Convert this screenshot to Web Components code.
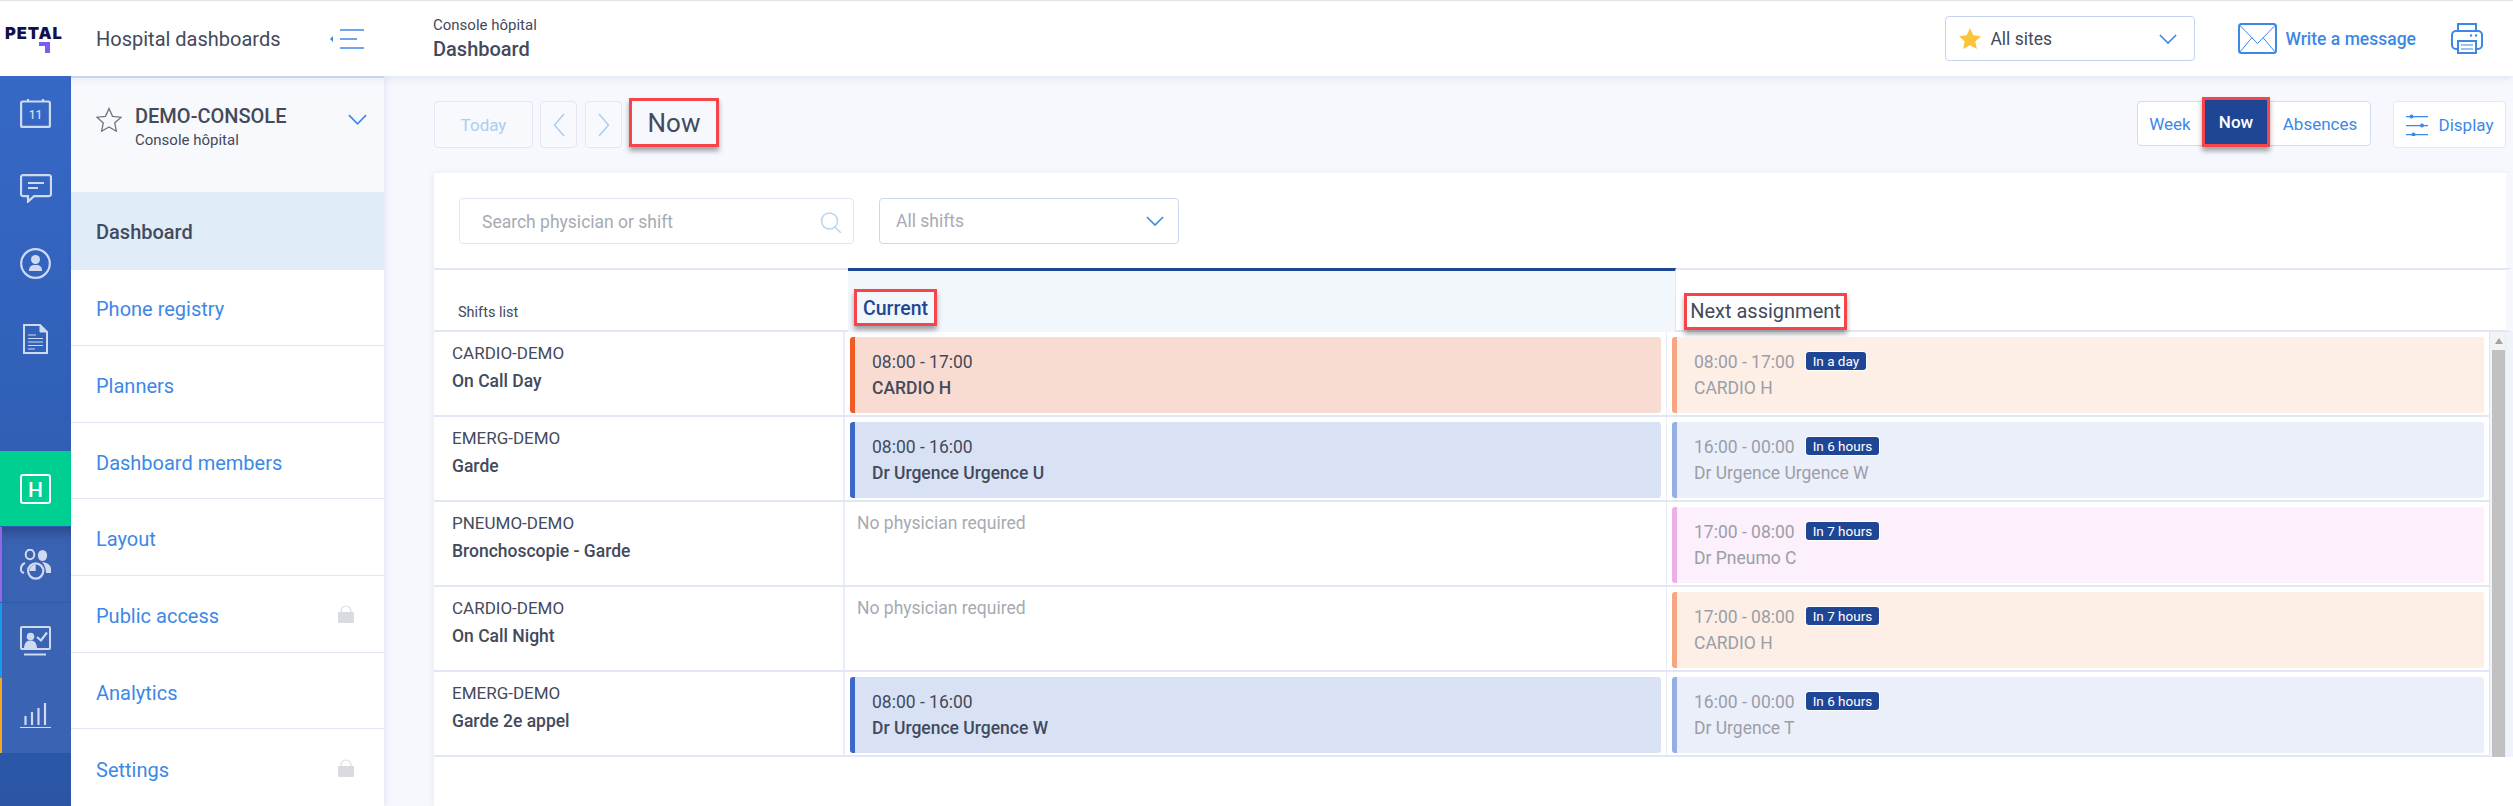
<!DOCTYPE html>
<html lang="en">
<head>
<meta charset="utf-8">
<title>Hospital dashboards</title>
<style>
html, body { margin: 0; height: 100%; overflow: hidden; }
body { font-family: Roboto, "Liberation Sans", sans-serif; color: #434a5c; background: #fff; }
</style>
</head>
<body>
<app-shell></app-shell>

<script>
// small helper, every element clones its own template into an open shadow root
function makeTemplate(html) {
    const t = document.createElement('template');
    t.innerHTML = html;
    return t;
}

class Base extends HTMLElement {
    constructor() {
        super();
        this.attachShadow({mode: 'open'});
        this.shadowRoot.appendChild(this.constructor.template.content.cloneNode(true));
    }
}

const chevronDown = (w, h) => `<svg width="${w}" height="${h}" viewBox="0 0 20 11" fill="none" stroke="#3d88e6" stroke-width="1.8"><path d="M1 1l9 9 9-9"/></svg>`;
const lockIcon = `<svg width="16" height="18" viewBox="0 0 16 18"><path d="M3 8V6a5 5 0 0 1 10 0v2" fill="none" stroke="#dcdde2" stroke-width="1.2"/><rect y="7" width="16" height="11" rx="1" fill="#dadbe0"/></svg>`;

class MarkBox extends Base {
    static template = makeTemplate(`
    <style>
    :host { display: inline-flex; align-items: center; justify-content: center; box-sizing: border-box; white-space: nowrap;
        border: 3px solid #f5444a; box-shadow: 0 4px 5px rgba(0,0,0,.35); }
    </style>
    <slot></slot>`);
}

class PetalLogo extends Base {
    static template = makeTemplate(`
    <style>
    :host { display: block; width: 58px; height: 27px; padding-left: 5px; }
    .word { font: 900 16.5px/13px Inter, sans-serif; letter-spacing: .9px; color: #12104a; display: block; margin-top: 2px; }
    svg { display: block; margin: 2px 0 0 34px; }
    </style>
    <span class="word">PETAL</span>
    <svg width="11" height="11" viewBox="0 0 11 11"><path d="M0 0h11v11H6V4H0z" fill="#7a5cf5"/></svg>`);
}

class AppTopbar extends Base {
    static template = makeTemplate(`
    <style>
    :host { display: flex; align-items: center; height: 75px; border-top: 1px solid #e4e4e4; background: #fff;
        box-shadow: 0 2px 8px rgba(80,110,200,.14); position: relative; z-index: 3; }
    petal-logo { flex: none; width: 91px; }
    .app { font-size: 20px; width: 233px; flex: none; }
    .back { flex: none; width: 104px; display: flex; }
    .crumb { flex: 1; line-height: 1; }
    .crumb small { display: block; font-size: 15px; margin-bottom: 6px; }
    .crumb b { display: block; font-size: 20px; font-weight: 500; }
    .site { flex: none; box-sizing: border-box; width: 250px; height: 45px; border: 1px solid #c3d3f0; border-radius: 4px;
        display: flex; align-items: center; padding: 0 17px 0 13px; font-size: 17.5px; gap: 9px; margin-right: 43px; }
    .site span { flex: 1; }
    .write { flex: none; display: flex; align-items: center; gap: 8px; color: #3d88e6; font-size: 17.5px; font-weight: 500; margin-right: 35px; }
    .print { flex: none; margin-right: 30px; display: flex; }
    </style>
    <petal-logo></petal-logo>
    <div class="app">Hospital dashboards</div>
    <div class="back">
        <svg width="35" height="20" viewBox="0 0 35 20"><path d="M1 10l3-3v6z" fill="#3d88e6"/><path d="M11 1h24M11 10h17M11 19h24" stroke="#3d88e6" stroke-width="1.3"/></svg>
    </div>
    <div class="crumb"><small>Console hôpital</small><b>Dashboard</b></div>
    <div class="site">
        <svg width="22" height="21" viewBox="0 0 24 23"><path d="M12 0l3.600 7.900 8.400 1-6.200 5.800 1.700 8.300L12 18.800 4.500 23l1.700-8.300L0 8.900l8.400-1z" fill="#fcc439"/></svg>
        <span>All sites</span>
        ${chevronDown(18, 10)}
    </div>
    <div class="write">
        <svg width="39" height="31" viewBox="0 0 39 31" fill="none" stroke="#3d88e6"><rect x="1" y="1" width="37" height="29" rx="2.500" stroke-width="2"/><path d="M1.500 2l18 18.500 18-18.500M1.500 29.500l12.500-15M37.500 29.500l-12.500-15" stroke-width="1"/></svg>
        Write a message
    </div>
    <div class="print">
        <svg width="32" height="31" viewBox="0 0 32 31" fill="none" stroke="#3d88e6" stroke-width="2"><path d="M7 8V1h18v7"/><rect x="1" y="8" width="30" height="18" rx="4"/><rect x="7" y="18" width="18" height="12" fill="#fff"/><path d="M10 22h12M10 26h12" stroke-width="1"/><circle cx="20" cy="12.500" r="1.200" fill="#3d88e6" stroke="none"/><circle cx="25" cy="12.500" r="1.200" fill="#3d88e6" stroke="none"/></svg>
    </div>`);
}

class RailItem extends Base {
    static template = makeTemplate(`
    <style>
    :host { display: flex; align-items: center; justify-content: center; height: 75px; box-sizing: border-box; }
    :host([stripe]) { background: #3a63b3; border-left: 2px solid var(--stripe); padding-right: 2px; }
    :host([active]) { background: #00cf92; }
    </style>
    <slot></slot>`);
}

class AppRail extends Base {
    static template = makeTemplate(`
    <style>
    :host { display: flex; flex-direction: column; flex: none; width: 71px;
        background: linear-gradient(#3668c6, #2b56a6); }
    .top { height: 375px; }
    .gap { height: 1px; }
    .shade { box-shadow: inset 0 14px 14px -10px rgba(25,40,90,.55); }
    svg { display: block; }
    </style>
    <div class="top">
        <rail-item><svg width="31" height="29" viewBox="0 0 31 29" fill="none" stroke="#cfdaf1" stroke-width="2.200"><rect x="1.100" y="2.500" width="28.800" height="25.400" rx="1.500"/><path d="M8 0v3M23 0v3" stroke-width="2.200"/><text x="15.500" y="19.500" text-anchor="middle" font-family="Roboto, sans-serif" font-size="12" font-weight="500" fill="#cfdaf1" stroke="none">11</text></svg></rail-item>
        <rail-item><svg width="32" height="29" viewBox="0 0 32 29" fill="none" stroke="#cfdaf1" stroke-width="2.200"><path d="M3 1.100h26a2 2 0 0 1 2 2v17a2 2 0 0 1-2 2H14l-6 5.500v-5.500H3a2 2 0 0 1-2-2v-17a2 2 0 0 1 2-2z"/><path d="M8 9h16M8 14h10"/></svg></rail-item>
        <rail-item><svg width="31" height="31" viewBox="0 0 31 31"><circle cx="15.500" cy="15.500" r="14.300" fill="none" stroke="#cfdaf1" stroke-width="2.200"/><circle cx="15.500" cy="11.500" r="4.500" fill="#cfdaf1"/><path d="M9 22a5 5 0 0 1 5-5h3a5 5 0 0 1 5 5v1H9z" fill="#cfdaf1"/></svg></rail-item>
        <rail-item><svg width="25" height="30" viewBox="0 0 25 30" fill="none" stroke="#cfdaf1"><path d="M1 1h16l7 7v21H1z" stroke-width="2"/><path d="M17 1l7 7h-7z" fill="#cfdaf1"/><path d="M5 11h8M5 14.500h15M5 18h15M5 21.500h15M5 25h7" stroke-width="1.200"/></svg></rail-item>
    </div>
    <rail-item active><svg width="31" height="30" viewBox="0 0 31 30"><rect x="1" y="1" width="29" height="28" rx="2" fill="none" stroke="#fff" stroke-width="2"/><text x="15.500" y="22.500" text-anchor="middle" font-family="Roboto, sans-serif" font-size="21" font-weight="500" fill="#fff">H</text></svg></rail-item>
    <div class="gap"></div>
    <rail-item stripe class="shade" style="--stripe:#9266e6"><svg width="31" height="31" viewBox="0 0 31 31"><ellipse cx="10" cy="5.500" rx="4.300" ry="4.800" fill="none" stroke="#cfdaf1" stroke-width="2"/><ellipse cx="22.500" cy="6.500" rx="4.600" ry="5.500" fill="#cfdaf1"/><path d="M5 14C1.500 15 .5 19 1 21.500c.3 1.300 1.300 2 3 2.500" fill="none" stroke="#cfdaf1" stroke-width="2.200"/><path d="M22 13c4.500.5 9 2.500 9 7v4h-5c0-4.500-1.500-8-4-11z" fill="#cfdaf1"/><circle cx="15.700" cy="22" r="7.600" fill="#3a63b3" stroke="#cfdaf1" stroke-width="2.200"/><path d="M15.700 15.500v6.500H9.500a6.500 6.500 0 0 1 6.200-6.500z" fill="#cfdaf1"/></svg></rail-item>
    <div class="gap"></div>
    <rail-item stripe style="--stripe:#159be8"><svg width="31" height="30" viewBox="0 0 31 30" fill="none" stroke="#cfdaf1"><rect x="1" y="1" width="29" height="22" rx="1" stroke-width="2"/><circle cx="10.500" cy="10.500" r="3.800" fill="#cfdaf1" stroke="none"/><path d="M4 23c0-6 2.500-8.500 6.500-8.500S17 17 17 23z" fill="#cfdaf1" stroke="none"/><path d="M17 11l4 3.500L27 6.500" stroke-width="2.200"/><path d="M4 28.500h22" stroke-width="2"/></svg></rail-item>
    <rail-item stripe style="--stripe:#f5a623"><svg width="31" height="25" viewBox="0 0 31 25" fill="none" stroke="#cfdaf1"><path d="M5.500 22v-9M12 22V9M18.500 22V5M25 22V0" stroke-width="2.200"/><path d="M0 24.500h31" stroke-width="1.100"/></svg></rail-item>`);
}

class SideRow extends Base {
    static template = makeTemplate(`
    <style>
    :host { display: flex; align-items: center; justify-content: space-between; box-sizing: border-box; height: 77px;
        padding: 4px 30px 0 25px; border-bottom: 1px solid #dfe7f5; color: #3d88e6; font-size: 20px; background: #fff; }
    :host([active]) { background: #e0edf8; color: #434a5c; font-weight: 500; border-bottom: 0; padding-top: 2px; }
    :host(:last-child) { border-bottom: 0; }
    </style>
    <slot></slot><slot name="end"></slot>`);
}

class SidePanel extends Base {
    static template = makeTemplate(`
    <style>
    :host { display: flex; flex-direction: column; flex: none; width: 313px; background: #fff;
        box-shadow: 2px 0 6px rgba(80,110,200,.12); position: relative; z-index: 2; overflow: hidden; }
    .head { box-sizing: border-box; height: 117px; flex: none; background: #f8f9fd; border-top: 2px solid #d3dff3; border-bottom: 1px solid #e3e9f5;
        display: flex; align-items: flex-start; padding: 27px 17px 0 25px; }
    .star { margin: 2px 13px 0 0; flex: none; }
    .txt { flex: 1; }
    .txt b { display: block; font-size: 20px; font-weight: 500; line-height: 21px; margin-top: 1px; }
    .txt small { display: block; font-size: 15px; margin-top: 4px; }
    .chev { margin-top: 5px; flex: none; }
    </style>
    <div class="head">
        <svg class="star" width="26" height="25" viewBox="0 0 26 25" fill="none" stroke="#6f7480" stroke-width="1.300"><path d="M13 1.500l3.500 7.800 8.500.9-6.300 5.700 1.700 8.300-7.400-4.200-7.400 4.200 1.700-8.300L1 10.200l8.500-.9z"/></svg>
        <div class="txt"><b>DEMO-CONSOLE</b><small>Console hôpital</small></div>
        <span class="chev">${chevronDown(19, 11)}</span>
    </div>
    <side-row active>Dashboard</side-row>
    <side-row>Phone registry</side-row>
    <side-row>Planners</side-row>
    <side-row>Dashboard members</side-row>
    <side-row>Layout</side-row>
    <side-row>Public access<span slot="end">${lockIcon}</span></side-row>
    <side-row>Analytics</side-row>
    <side-row>Settings<span slot="end">${lockIcon}</span></side-row>`);
}

class ToolBtn extends Base {
    static template = makeTemplate(`
    <style>
    :host { display: inline-flex; align-items: center; justify-content: center; box-sizing: border-box; height: 47px;
        border: 1px solid #e0e7f5; border-radius: 4px; background: #f8f9fd; color: #a9cdf3; font-size: 17px; gap: 11px; }
    :host([live]) { background: #fff; color: #3d88e6; }
    </style>
    <slot></slot>`);
}

class ViewSwitch extends Base {
    static template = makeTemplate(`
    <style>
    :host { display: flex; align-items: flex-start; }
    .wrap { display: flex; align-items: center; box-sizing: border-box; width: 234px; height: 45px; background: #fff;
        border: 1px solid #cfdcf3; border-radius: 4px; color: #3d88e6; font-size: 17px; }
    .w { width: 64px; text-align: center; }
    .a { flex: 1; text-align: center; }
    mark-box { width: 68px; height: 50px; margin-top: -4px; flex: none; background: #1f4695; color: #fff; font-weight: 500; margin-bottom: -1px; }
    </style>
    <div class="wrap"><span class="w">Week</span><mark-box>Now</mark-box><span class="a">Absences</span></div>`);
}

class DayToolbar extends Base {
    static template = makeTemplate(`
    <style>
    :host { display: flex; align-items: flex-start; height: 47px; margin-bottom: 25px; padding-right: 7px; }
    tool-btn svg { display: block; }
    .today { width: 99px; margin-right: 7px; }
    .nav { width: 37px; margin-right: 8px; }
    .nav2 { width: 37px; margin-right: 7px; }
    mark-box.now { width: 90px; height: 49px; margin-top: -3px; font-size: 26px; color: #434a5c; }
    .fill { flex: 1; }
    view-switch { margin-right: 22px; }
    .disp { width: 113px; }
    </style>
    <tool-btn class="today">Today</tool-btn>
    <tool-btn class="nav"><svg width="12" height="24" viewBox="0 0 12 24" fill="none" stroke="#a9cdf3" stroke-width="1.500"><path d="M11 1L1.500 12 11 23"/></svg></tool-btn>
    <tool-btn class="nav2"><svg width="12" height="24" viewBox="0 0 12 24" fill="none" stroke="#a9cdf3" stroke-width="1.500"><path d="M1 1l9.500 11L1 23"/></svg></tool-btn>
    <mark-box class="now">Now</mark-box>
    <div class="fill"></div>
    <view-switch></view-switch>
    <tool-btn class="disp" live><svg width="22" height="22" viewBox="0 0 22 22" fill="#3d88e6"><path d="M0 2h22v1.300H0zM0 11h22v1.300H0zM0 20h22v1.300H0z"/><circle cx="5.500" cy="2.500" r="2"/><circle cx="16" cy="11.500" r="2"/><circle cx="7.500" cy="20.500" r="2"/></svg>Display</tool-btn>`);
}

class FilterBar extends Base {
    static template = makeTemplate(`
    <style>
    :host { display: flex; box-sizing: border-box; height: 95px; padding: 25px 0 0 25px; gap: 25px; border-right: 7px solid #f7f8fd; }
    .box { box-sizing: border-box; height: 46px; display: flex; align-items: center; justify-content: space-between;
        border-radius: 4px; font-size: 17.5px; color: #a7aab2; }
    .search { width: 395px; border: 1px solid #dfe7f5; padding: 2px 11px 0 22px; }
    .select { width: 300px; border: 1px solid #c9d7f1; padding: 0 14px 0 16px; }
    </style>
    <div class="box search">Search physician or shift
        <svg width="22" height="21" viewBox="0 0 22 21" fill="none" stroke="#b5d4f4" stroke-width="1.500"><circle cx="9.500" cy="9" r="8"/><path d="M15 15l6 6"/></svg>
    </div>
    <div class="box select">All shifts ${chevronDown(18, 10)}</div>`);
}

class BoardHeader extends Base {
    static template = makeTemplate(`
    <style>
    :host { display: grid; grid-template-columns: 414px 828px 1fr; height: 64px; box-sizing: border-box;
        border-top: 2px solid #e1e7f5; border-bottom: 2px solid #e1e7f5; border-right: 7px solid #f7f8fd; font-size: 19.5px; }
    .list { font-size: 14.5px; padding: 34px 0 0 24px; }
    .cur { background: #f2f7fc; border-top: 3px solid #1f4695; margin-top: -2px; border-right: 1px solid #e1e7f5;
        color: #1f4695; font-weight: 500; padding: 18px 0 0 6px; box-sizing: border-box; height: 64px; }
    .next { padding: 23px 0 0 8px; }
    mark-box { height: 37px; padding: 0 4px; }
    .cur mark-box { width: 83px; padding-top: 2px; }
    .next mark-box { width: 163px; height: 37px; font-size: 20px; padding-bottom: 2px; }
    </style>
    <div class="list">Shifts list</div>
    <div class="cur"><mark-box>Current</mark-box></div>
    <div class="next"><mark-box>Next assignment</mark-box></div>`);
}

const cardColors = {
    orange: ['#f9dcd1', '#f15a22'],
    blue: ['#d9e2f5', '#3c69c9'],
    orangeSoft: ['#fdeee6', '#f7a582'],
    blueSoft: ['#ebeff9', '#94afe4'],
    pinkSoft: ['#fbf0fc', '#eab0e7']
};

class ShiftCard extends Base {
    static template = makeTemplate(`
    <style>
    :host { display: block; box-sizing: border-box; height: 76px; border-radius: 3px; padding: 12px 0 0 17px; border-left: 5px solid; font-size: 17.5px; }
    :host([faded]) { color: #9b9ea8; }
    .time { height: 26px; display: flex; align-items: center; gap: 11px; }
    .name { line-height: 26px; font-weight: 500; }
    :host([faded]) .name { font-weight: 400; }
    .badge { background: #1f4695; color: #fff; font-size: 13.5px; line-height: 18px; padding: 0 7px; border-radius: 3px; box-shadow: 0 0 0 1px #fff; margin-top: -2px; }
    .badge:empty { display: none; }
    </style>
    <div class="time"><span class="t"></span><span class="badge"></span></div>
    <div class="name"></div>`);

    connectedCallback() {
        const c = cardColors[this.getAttribute('tone')];
        this.style.background = c[0];
        this.style.borderLeftColor = c[1];
        this.shadowRoot.querySelector('.t').textContent = this.getAttribute('time');
        this.shadowRoot.querySelector('.badge').textContent = this.getAttribute('badge') || '';
        this.shadowRoot.querySelector('.name').textContent = this.getAttribute('who');
    }
}

class ShiftRow extends Base {
    static template = makeTemplate(`
    <style>
    :host { display: grid; grid-template-columns: 411px 821px 1fr; height: 85px; box-sizing: border-box;
        border-bottom: 2px solid #e1e7f5; }
    .shift { padding: 8px 0 0 18px; font-size: 17px; line-height: 27px; border-right: 2px solid #e8edf8; }
    .shift b { display: block; font-weight: 500; font-size: 17.5px; line-height: 28px; }
    .cell { padding: 5px 5px 0 5px; }
    .cell + .cell { border-left: 1px solid #e8edf8; }
    </style>
    <div class="shift"><span class="dept"></span><b class="label"></b></div>
    <div class="cell"><slot name="current"></slot></div>
    <div class="cell"><slot name="next"></slot></div>`);

    connectedCallback() {
        this.shadowRoot.querySelector('.dept').textContent = this.getAttribute('dept');
        this.shadowRoot.querySelector('.label').textContent = this.getAttribute('label');
    }
}

class NoPhysician extends Base {
    static template = makeTemplate(`
    <style>:host { display: block; color: #a7aab2; font-size: 17.5px; padding: 6px 0 0 7px; }</style>
    No physician required`);
}

class FakeScroll extends Base {
    static template = makeTemplate(`
    <style>
    :host { display: block; flex: none; width: 24px; height: 425px; box-sizing: border-box; background: #f0f3fb; border-left: 1px solid #e1e7f5; }
    .track { margin-left: 2px; width: 13px; height: 100%; background: #f3f3f3; display: flex; flex-direction: column; border-right: 1px solid #ececec; }
    .arrow { height: 18px; display: flex; justify-content: center; padding-top: 6px; box-sizing: border-box; }
    .thumb { flex: 1; background: #c1c1c1; }
    </style>
    <div class="track">
        <div class="arrow"><svg width="8" height="6" viewBox="0 0 8 6"><path d="M4 0l4 6H0z" fill="#a3a3a3"/></svg></div>
        <div class="thumb"></div>
    </div>`);
}

class ShiftBoard extends Base {
    static template = makeTemplate(`
    <style>
    :host { display: block; flex: 1; background: #fff; box-shadow: -2px 0 6px rgba(80,110,200,.08); }
    .body { display: flex; align-items: flex-start; }
    .rows { flex: 1; min-width: 0; }
    </style>
    <filter-bar></filter-bar>
    <board-header></board-header>
    <div class="body">
        <div class="rows"><slot></slot></div>
        <fake-scroll></fake-scroll>
    </div>`);
}

class MainArea extends Base {
    static template = makeTemplate(`
    <style>
    :host { display: flex; flex-direction: column; flex: 1; min-width: 0; background: #f7f8fd; padding: 25px 0 0 50px; }
    </style>
    <day-toolbar></day-toolbar>
    <shift-board>
        <shift-row dept="CARDIO-DEMO" label="On Call Day">
            <shift-card slot="current" tone="orange" time="08:00 - 17:00" who="CARDIO H"></shift-card>
            <shift-card slot="next" faded tone="orangeSoft" time="08:00 - 17:00" badge="In a day" who="CARDIO H"></shift-card>
        </shift-row>
        <shift-row dept="EMERG-DEMO" label="Garde">
            <shift-card slot="current" tone="blue" time="08:00 - 16:00" who="Dr Urgence Urgence U"></shift-card>
            <shift-card slot="next" faded tone="blueSoft" time="16:00 - 00:00" badge="In 6 hours" who="Dr Urgence Urgence W"></shift-card>
        </shift-row>
        <shift-row dept="PNEUMO-DEMO" label="Bronchoscopie - Garde">
            <no-physician slot="current"></no-physician>
            <shift-card slot="next" faded tone="pinkSoft" time="17:00 - 08:00" badge="In 7 hours" who="Dr Pneumo C"></shift-card>
        </shift-row>
        <shift-row dept="CARDIO-DEMO" label="On Call Night">
            <no-physician slot="current"></no-physician>
            <shift-card slot="next" faded tone="orangeSoft" time="17:00 - 08:00" badge="In 7 hours" who="CARDIO H"></shift-card>
        </shift-row>
        <shift-row dept="EMERG-DEMO" label="Garde 2e appel">
            <shift-card slot="current" tone="blue" time="08:00 - 16:00" who="Dr Urgence Urgence W"></shift-card>
            <shift-card slot="next" faded tone="blueSoft" time="16:00 - 00:00" badge="In 6 hours" who="Dr Urgence T"></shift-card>
        </shift-row>
    </shift-board>`);
}

class AppShell extends Base {
    static template = makeTemplate(`
    <style>
    :host { display: flex; flex-direction: column; height: 806px; overflow: hidden; }
    .under { display: flex; flex: 1; min-height: 0; }
    </style>
    <app-topbar></app-topbar>
    <div class="under">
        <app-rail></app-rail>
        <side-panel></side-panel>
        <main-area></main-area>
    </div>`);
}

// inner elements first so the shell can upgrade them as it is cloned
customElements.define('mark-box', MarkBox);
customElements.define('petal-logo', PetalLogo);
customElements.define('app-topbar', AppTopbar);
customElements.define('rail-item', RailItem);
customElements.define('app-rail', AppRail);
customElements.define('side-row', SideRow);
customElements.define('side-panel', SidePanel);
customElements.define('tool-btn', ToolBtn);
customElements.define('view-switch', ViewSwitch);
customElements.define('day-toolbar', DayToolbar);
customElements.define('filter-bar', FilterBar);
customElements.define('board-header', BoardHeader);
customElements.define('shift-card', ShiftCard);
customElements.define('shift-row', ShiftRow);
customElements.define('no-physician', NoPhysician);
customElements.define('fake-scroll', FakeScroll);
customElements.define('shift-board', ShiftBoard);
customElements.define('main-area', MainArea);
customElements.define('app-shell', AppShell);
</script>
</body>
</html>
